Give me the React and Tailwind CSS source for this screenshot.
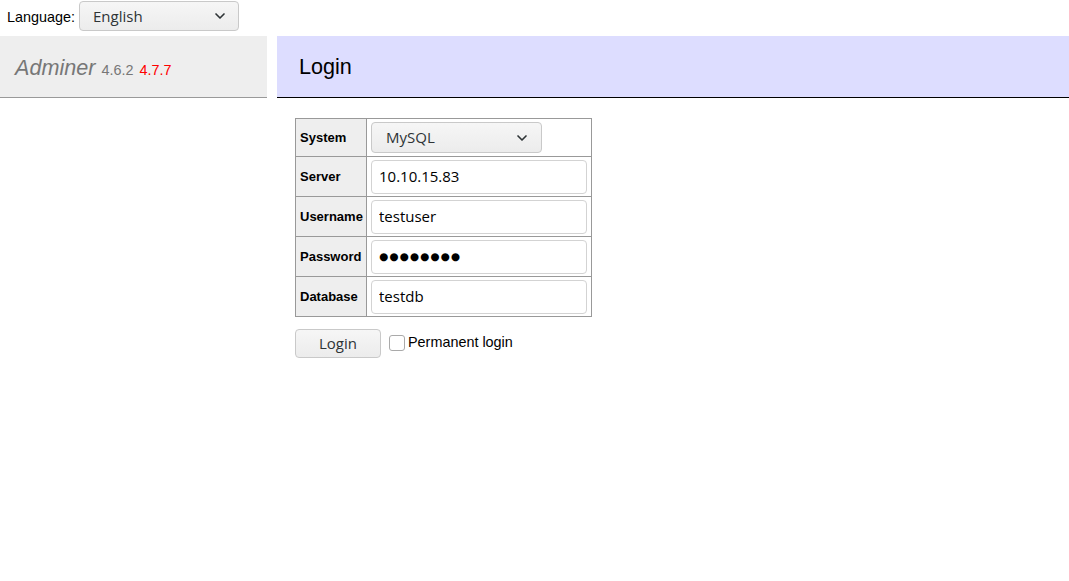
import { ChevronDown } from "lucide-react";

const fields = [
  { label: "Server", value: "10.10.15.83" },
  { label: "Username", value: "testuser" },
  { label: "Password", value: "●●●●●●●●", secret: true },
  { label: "Database", value: "testdb" },
];

const formFont = { fontFamily: '"Open Sans", "Noto Sans", sans-serif' };

const FakeSelect = ({ value, className }) => (
  <div
    className={`flex items-center justify-between rounded-[4px] border border-[#c9c9c9] bg-gradient-to-b from-[#f6f6f6] to-[#ececec] text-[15px] text-[#2e3436] ${className}`}
    style={formFont}
  >
    <span>{value}</span>
    <ChevronDown size={16} strokeWidth={2.5} className="text-[#2e3436]" />
  </div>
);

export default function App() {
  return (
    <div className="min-h-[581px] bg-white font-['Liberation_Sans',Arial,sans-serif] text-[14.4px] text-black">
      <div className="flex h-9 items-start pl-[7px] pt-px">
        <span className="mt-[6px] mr-1">Language:</span>
        <FakeSelect value="English" className="h-[30px] w-[160px] pl-[13px] pr-[10px]" />
      </div>

      <div className="flex">
        <div className="flex h-[62px] w-[267px] items-center border-b border-[#999] bg-[#eee] pl-[15px] pt-[4px]">
          <span className="text-[21.6px] italic text-[#777]">Adminer</span>
          <span className="ml-[6px] mt-[4px] text-[14.4px] text-[#777]">4.6.2</span>
          <span className="ml-[6px] mt-[4px] text-[14.4px] text-[#f00]">4.7.7</span>
        </div>
        <div className="ml-[10px] flex flex-1 flex-col">
          <div className="flex h-[62px] items-center border-b border-black bg-[#ddf] pl-[22px] pt-[1px]">
            <h2 className="text-[21.6px]">Login</h2>
          </div>

          <div className="pl-[18px] pt-[20px]">
            <table className="border-collapse border border-[#999]">
              <tbody>
                <tr>
                  <th className="h-[38px] w-[71px] border border-[#999] bg-[#eee] pl-1 text-left text-[13px] font-bold">
                    System
                  </th>
                  <td className="border border-[#999] pl-1 pr-1">
                    <FakeSelect value="MySQL" className="h-[31px] w-[171px] pl-[14px] pr-[11px]" />
                  </td>
                </tr>
                {fields.map((f) => (
                  <tr key={f.label}>
                    <th className="h-10 border border-[#999] bg-[#eee] pl-1 text-left text-[13px] font-bold">
                      {f.label}
                    </th>
                    <td className="w-[225px] border border-[#999] pl-1 pr-1">
                      <input
                        readOnly
                        type="text"
                        defaultValue={f.value}
                        className={`h-[34px] w-[216px] rounded-[4px] border border-[#d3d3d3] bg-white pl-[7px] pr-2 pb-px text-black outline-none ${
                          f.secret ? "text-[10.5px] tracking-[1.1px]" : "text-[15px]"
                        }`}
                        style={f.secret ? { fontFamily: '"DejaVu Sans", sans-serif' } : formFont}
                      />
                    </td>
                  </tr>
                ))}
              </tbody>
            </table>

            <div className="mt-3 flex items-center">
              <button
                type="button"
                className="h-[29px] w-[86px] rounded-[4px] border border-[#c9c9c9] bg-gradient-to-b from-[#f6f6f6] to-[#ececec] text-[15px] text-[#2e3436]"
                style={formFont}
              >
                Login
              </button>
              <label className="ml-2 flex items-center">
                <span className="mr-[3px] inline-block h-4 w-4 rounded-[3px] border border-[#aaa] bg-white" />
                <span className="-mt-[2px]">Permanent login</span>
              </label>
            </div>
          </div>
        </div>
      </div>
    </div>
  );
}
